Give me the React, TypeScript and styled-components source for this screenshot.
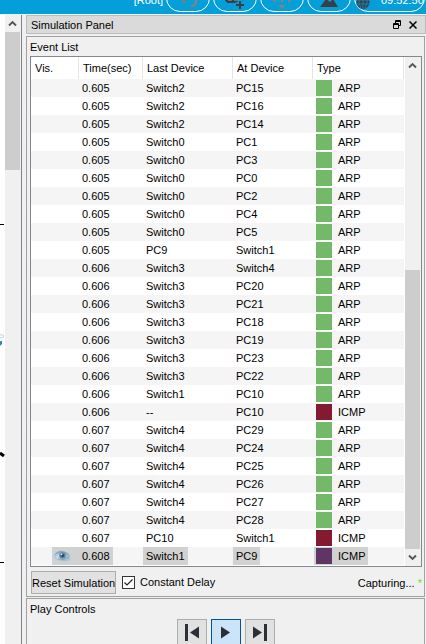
import React from 'react';
import styled, { createGlobalStyle } from 'styled-components';

const GlobalStyle = createGlobalStyle`
  * { box-sizing: border-box; }
  body { margin: 0; background: #f0f0f0; }
  body, button, input { font: 11px/14px "Liberation Sans", Arial, sans-serif; color: #000; }
`;

const Window = styled.div`
  display: flex;
  flex-direction: column;
  height: 100vh;
  overflow: hidden;
`;

const TopBar = styled.header`
  display: flex;
  justify-content: flex-end;
  align-items: flex-end;
  flex: none;
  height: 14px;
  padding: 0 1px 2px 0;
  gap: 3px;
  overflow: hidden;
  background: #049fd9;
  color: #fff;
`;

const RootLabel = styled.span`
  padding-bottom: 5px;
`;

const Pill = styled.button<{ $wide?: boolean }>`
  display: flex;
  align-items: flex-end;
  flex: none;
  justify-content: ${(p) => (p.$wide ? 'flex-start' : 'center')};
  width: ${(p) => (p.$wide ? 71 : 44)}px;
  height: 28px;
  padding: 0;
  border: 1px solid #fff;
  border-radius: 14px;
  background: #049fd9;
  color: #fff;
  svg { display: block; flex: none; }
`;

const Clock = styled.time`
  padding: 0 0 4px 10px;
`;

const Body = styled.div`
  display: flex;
  flex: 1;
  min-height: 0;
  border-top: 1px solid #f0f0f0;
`;

const Workspace = styled.div`
  flex: none;
  width: 5px;
  background: #fff;
  svg { display: block; }
`;

const Track = styled.div<{ $inset?: boolean }>`
  display: flex;
  flex-direction: column;
  flex: none;
  width: ${(p) => (p.$inset ? 16 : 15)}px;
  padding-right: ${(p) => (p.$inset ? 1 : 0)}px;
  background: #f0f0f0;
`;

const ArrowButton = styled.button`
  display: grid;
  place-items: center;
  flex: none;
  height: 17px;
  padding: 0;
  border: 0;
  background: #f0f0f0;
`;

const Thumb = styled.div<{ $height: number; $bottom?: boolean }>`
  flex: none;
  height: ${(p) => p.$height}px;
  margin-top: ${(p) => (p.$bottom ? 'auto' : '0')};
  background: #cdcdcd;
`;

const Dock = styled.aside`
  display: flex;
  flex-direction: column;
  flex: 1;
  min-width: 0;
  margin-left: 1px;
  padding-left: 4px;
  border-left: 1px solid #82828c;
`;

const TitleBar = styled.div`
  display: flex;
  align-items: center;
  flex: none;
  height: 19px;
  padding: 0 4px;
  border: 1px solid #bcbcbc;
  background: #dadada;
`;

const Title = styled.h1`
  flex: 1;
  margin: 0;
  font-size: 11px;
  font-weight: 400;
`;

const TitleButton = styled.button`
  display: grid;
  place-items: center;
  width: 16px;
  height: 16px;
  padding: 0;
  border: 0;
  background: transparent;
`;

const Group = styled.section<{ $fill?: boolean }>`
  display: flex;
  flex-direction: column;
  flex: ${(p) => (p.$fill ? '1 0 auto' : 'none')};
  margin: ${(p) => (p.$fill ? '1px 1px 0 0' : '2px 1px 0 0')};
  padding: 0 2px 0 3px;
  border: 1px solid #a0a0a0;
  border-bottom-width: ${(p) => (p.$fill ? 0 : 1)}px;
`;

const GroupTitle = styled.h2`
  margin: 0;
  padding: 3px 0 2px;
  font-size: 11px;
  font-weight: 400;
`;

const ListFrame = styled.div`
  display: flex;
  border: 1px solid #828790;
  background: #fff;
`;

const Viewport = styled.div`
  flex: 1;
  min-width: 0;
  padding: 0 1px 1px 0;
`;

const Table = styled.table`
  width: 100%;
  table-layout: fixed;
  border-collapse: separate;
  border-spacing: 0;
`;

const Col = styled.col<{ $width?: number }>`
  width: ${(p) => (p.$width ? p.$width + 'px' : 'auto')};
`;

const HeadCell = styled.th`
  height: 22px;
  padding: 0 4px;
  border-right: 1px solid #e5e5e5;
  font-weight: 400;
  text-align: left;
`;

const Row = styled.tr`
  &:nth-child(odd) { background: #f5f5f5; }
`;

const Cell = styled.td`
  height: 18px;
  padding: 0;
  line-height: 18px;
`;

const Mark = styled.span<{ $on: boolean }>`
  display: inline-flex;
  align-items: center;
  vertical-align: top;
  height: 18px;
  padding: 0 3px;
  background: ${(p) => (p.$on ? '#d1d1d1' : 'transparent')};
`;

const EyeCell = styled.span`
  display: flex;
  align-items: center;
  height: 18px;
  margin-left: 21px;
  padding-left: 1px;
  background: #d1d1d1;
`;

const TypeTag = styled.span<{ $on: boolean }>`
  display: inline-flex;
  align-items: center;
  gap: 6px;
  vertical-align: top;
  height: 18px;
  margin-left: 1px;
  padding: 0 2px;
  background: ${(p) => (p.$on ? '#d1d1d1' : 'transparent')};
`;

const Swatch = styled.span<{ $color: string }>`
  width: 16px;
  height: 16px;
  background: ${(p) => p.$color};
`;

const Options = styled.div`
  display: flex;
  align-items: flex-start;
  height: 29px;
  padding-top: 4px;
`;

const ResetButton = styled.button`
  height: 23px;
  width: 85px;
  margin-left: 1px;
  padding: 0;
  border: 1px solid #adadad;
  background: #e1e1e1;
  white-space: nowrap;
`;

const CheckLabel = styled.label`
  display: flex;
  align-items: center;
  gap: 5px;
  height: 22px;
  margin-left: 6px;
`;

const CheckBox = styled.input`
  appearance: none;
  width: 13px;
  height: 13px;
  margin: 0;
  border: 1px solid #333;
  background: #fff;
  &:checked {
    background: #fff url("data:image/svg+xml,%3Csvg xmlns='http://www.w3.org/2000/svg' viewBox='0 0 11 11'%3E%3Cpath d='M1.5 5.5L4 8L9.5 2.5' fill='none' stroke='%23222' stroke-width='1.2'/%3E%3C/svg%3E");
  }
`;

const Status = styled.span`
  margin-left: auto;
  padding: 5px 0 0;
  white-space: pre;
`;

const Star = styled.span`
  color: #6be600;
`;

const Controls = styled.div`
  display: flex;
  justify-content: center;
  gap: 4px;
  padding: 1px 0 8px;
`;

const PlayButton = styled.button<{ $active?: boolean }>`
  display: grid;
  place-items: center;
  width: 30px;
  height: 27px;
  padding: 0;
  border: 1px solid ${(p) => (p.$active ? '#005499' : '#adadad')};
  background: ${(p) => (p.$active ? '#cce4f7' : '#e1e1e1')};
`;

const Chevron = ({ down = false }: { down?: boolean }) => (
  <svg width="9" height="7" viewBox="0 0 9 7" aria-hidden="true">
    <path d={down ? 'M1 1.5L4.5 5L8 1.5' : 'M1 5.5L4.5 2L8 5.5'} fill="none" stroke="#555" strokeWidth="1.9" />
  </svg>
);

const Eye = () => (
  <svg width="18" height="14" viewBox="0 0 18 14" role="img" aria-label="Visible">
    <path d="M1 7Q4 1 10 2Q15 3 17 7V11Q14 13 9 12Q4 12 1 8Z" fill="#a3c3d8" />
    <path d="M1 6Q5 1 10 2Q15 3 17 7Q12 4 8 4Q4 4 1 6Z" fill="#8aa9bf" />
    <path d="M2 8Q4 5 7 5Q6 9 9 11Q4 11 2 8Z" fill="#c0d6e3" />
    <circle cx="9.5" cy="6.5" r="3.3" fill="#6288a5" />
    <circle cx="9.5" cy="6.5" r="1.7" fill="#2c4a63" />
    <circle cx="8.5" cy="5.3" r="0.9" fill="#d7e8f1" />
    <path d="M5 10Q11 12 16 8" fill="none" stroke="#83a7c0" />
  </svg>
);

const GREEN = '#74b869';
const RED = '#841a32';
const PURPLE = '#5f3564';

type Event = [time: string, last: string, at: string, type?: string];

const events: Event[] = [
  ['0.605', 'Switch2', 'PC15'],
  ['0.605', 'Switch2', 'PC16'],
  ['0.605', 'Switch2', 'PC14'],
  ['0.605', 'Switch0', 'PC1'],
  ['0.605', 'Switch0', 'PC3'],
  ['0.605', 'Switch0', 'PC0'],
  ['0.605', 'Switch0', 'PC2'],
  ['0.605', 'Switch0', 'PC4'],
  ['0.605', 'Switch0', 'PC5'],
  ['0.605', 'PC9', 'Switch1'],
  ['0.606', 'Switch3', 'Switch4'],
  ['0.606', 'Switch3', 'PC20'],
  ['0.606', 'Switch3', 'PC21'],
  ['0.606', 'Switch3', 'PC18'],
  ['0.606', 'Switch3', 'PC19'],
  ['0.606', 'Switch3', 'PC23'],
  ['0.606', 'Switch3', 'PC22'],
  ['0.606', 'Switch1', 'PC10'],
  ['0.606', '--', 'PC10', 'ICMP'],
  ['0.607', 'Switch4', 'PC29'],
  ['0.607', 'Switch4', 'PC24'],
  ['0.607', 'Switch4', 'PC25'],
  ['0.607', 'Switch4', 'PC26'],
  ['0.607', 'Switch4', 'PC27'],
  ['0.607', 'Switch4', 'PC28'],
  ['0.607', 'PC10', 'Switch1', 'ICMP'],
  ['0.608', 'Switch1', 'PC9', 'ICMP'],
];

export default function App() {
  return (
    <>
      <GlobalStyle />
      <Window>
        <TopBar>
          <RootLabel>[Root]</RootLabel>
          <Pill aria-label="Back">
            <svg width="42" height="14" viewBox="0 0 42 14">
              <path d="M16 2V5H19" fill="none" stroke="#6f7f86" strokeWidth="2" />
              <path d="M29 2Q30 9 24 9" fill="none" stroke="#7b8589" strokeWidth="2.4" />
            </svg>
          </Pill>
          <Pill aria-label="New cluster">
            <svg width="42" height="14" viewBox="0 0 42 14">
              <path d="M11 0H29V3Q28 6 25 6H14Q11 5 11 2Z" fill="#393f45" />
              <path d="M14 3H18M20 3H24" stroke="#9aa5ab" />
              <path d="M26 2V12M21 8H31" stroke="#049fd9" strokeWidth="5" />
              <path d="M26 4V12M22 8H30" stroke="#393f45" strokeWidth="2" />
            </svg>
          </Pill>
          <Pill aria-label="Move object">
            <svg width="42" height="14" viewBox="0 0 42 14" fill="#7b8589">
              <path d="M17 8H25L21 12Z" />
              <path d="M11 3L15 0V6ZM31 3L27 0V6ZM20 2H22V5H20Z" />
            </svg>
          </Pill>
          <Pill aria-label="Set background">
            <svg width="42" height="14" viewBox="0 0 42 14">
              <path d="M12 10L18 2L22 5L25 2L30 10Z" fill="#393f45" />
            </svg>
          </Pill>
          <Pill $wide aria-label="Environment">
            <svg width="16" height="14" viewBox="0 0 16 14">
              <circle cx="8" cy="5.5" r="6.5" fill="#393f45" />
              <path d="M1 3H15M1 7H15M8 0V12M4 1Q3 7 6 11M12 1Q13 7 10 11" fill="none" stroke="#1683ad" />
            </svg>
            <Clock>09:52:50</Clock>
          </Pill>
        </TopBar>

        <Body>
          <Workspace>
            <svg width="5" height="629" viewBox="0 0 5 629" aria-hidden="true">
              <path d="M0 209.5H4M0 547.5H4" stroke="#000" />
              <path d="M0 320Q3 319 4 321Q4 323 0 323" fill="none" stroke="#b4d5e0" />
              <path d="M0 326Q2 327 2 325V329L0 331Z" fill="#2d8aa8" />
              <path d="M0 438L4 441" stroke="#000" strokeWidth="3" />
            </svg>
          </Workspace>
          <Track>
            <ArrowButton aria-label="Scroll workspace up"><Chevron /></ArrowButton>
            <Thumb $height={138} />
          </Track>

          <Dock>
            <TitleBar>
              <Title>Simulation Panel</Title>
              <TitleButton aria-label="Float panel">
                <svg width="8" height="9" viewBox="0 0 8 9" fill="none" stroke="#000">
                  <path d="M2.5 3V.5H7.5V5.5H6M2 1.5H8M.5 3.5H5.5V8.5H.5ZM0 4.5H6" />
                </svg>
              </TitleButton>
              <TitleButton aria-label="Close panel">
                <svg width="8" height="8" viewBox="0 0 8 8">
                  <path d="M.5 .5L7.5 7.5M7.5 .5L.5 7.5" stroke="#000" strokeWidth="1.5" />
                </svg>
              </TitleButton>
            </TitleBar>

            <Group>
              <GroupTitle>Event List</GroupTitle>
              <ListFrame>
                <Viewport>
                  <Table>
                    <colgroup>
                      <Col $width={48} />
                      <Col $width={64} />
                      <Col $width={90} />
                      <Col $width={80} />
                      <Col />
                    </colgroup>
                    <thead>
                      <tr>
                        <HeadCell>Vis.</HeadCell>
                        <HeadCell>Time(sec)</HeadCell>
                        <HeadCell>Last Device</HeadCell>
                        <HeadCell>At Device</HeadCell>
                        <HeadCell>Type</HeadCell>
                      </tr>
                    </thead>
                    <tbody>
                      {events.map(([time, last, at, type = 'ARP'], i) => {
                        const on = i === events.length - 1;
                        const color = on ? PURPLE : type === 'ICMP' ? RED : GREEN;
                        return (
                          <Row key={i} aria-selected={on}>
                            <Cell>{on && <EyeCell><Eye /></EyeCell>}</Cell>
                            <Cell><Mark $on={on}>{time}</Mark></Cell>
                            <Cell><Mark $on={on}>{last}</Mark></Cell>
                            <Cell><Mark $on={on}>{at}</Mark></Cell>
                            <Cell><TypeTag $on={on}><Swatch $color={color} />{type}</TypeTag></Cell>
                          </Row>
                        );
                      })}
                    </tbody>
                  </Table>
                </Viewport>
                <Track $inset>
                  <ArrowButton aria-label="Scroll events up"><Chevron /></ArrowButton>
                  <Thumb $height={279} $bottom />
                  <ArrowButton aria-label="Scroll events down"><Chevron down /></ArrowButton>
                </Track>
              </ListFrame>
              <Options>
                <ResetButton>Reset Simulation</ResetButton>
                <CheckLabel>
                  <CheckBox type="checkbox" defaultChecked />
                  Constant Delay
                </CheckLabel>
                <Status>Capturing... <Star>*</Star></Status>
              </Options>
            </Group>

            <Group $fill>
              <GroupTitle>Play Controls</GroupTitle>
              <Controls>
                <PlayButton aria-label="Go back to last event">
                  <svg width="16" height="17" viewBox="0 0 16 17" fill="#2b2f36">
                    <path d="M1 0H4V17H1ZM15 2.5V14.500L6 8.5Z" />
                  </svg>
                </PlayButton>
                <PlayButton $active aria-label="Play">
                  <svg width="16" height="17" viewBox="0 0 16 17" fill="#2b2f36">
                    <path d="M3 2.5L12 8.5L3 14.5Z" />
                  </svg>
                </PlayButton>
                <PlayButton aria-label="Capture then forward">
                  <svg width="16" height="17" viewBox="0 0 16 17" fill="#2b2f36">
                    <path d="M12 0H15V17H12ZM1 2.5V14.5L10 8.5Z" />
                  </svg>
                </PlayButton>
              </Controls>
            </Group>
          </Dock>
        </Body>
      </Window>
    </>
  );
}
